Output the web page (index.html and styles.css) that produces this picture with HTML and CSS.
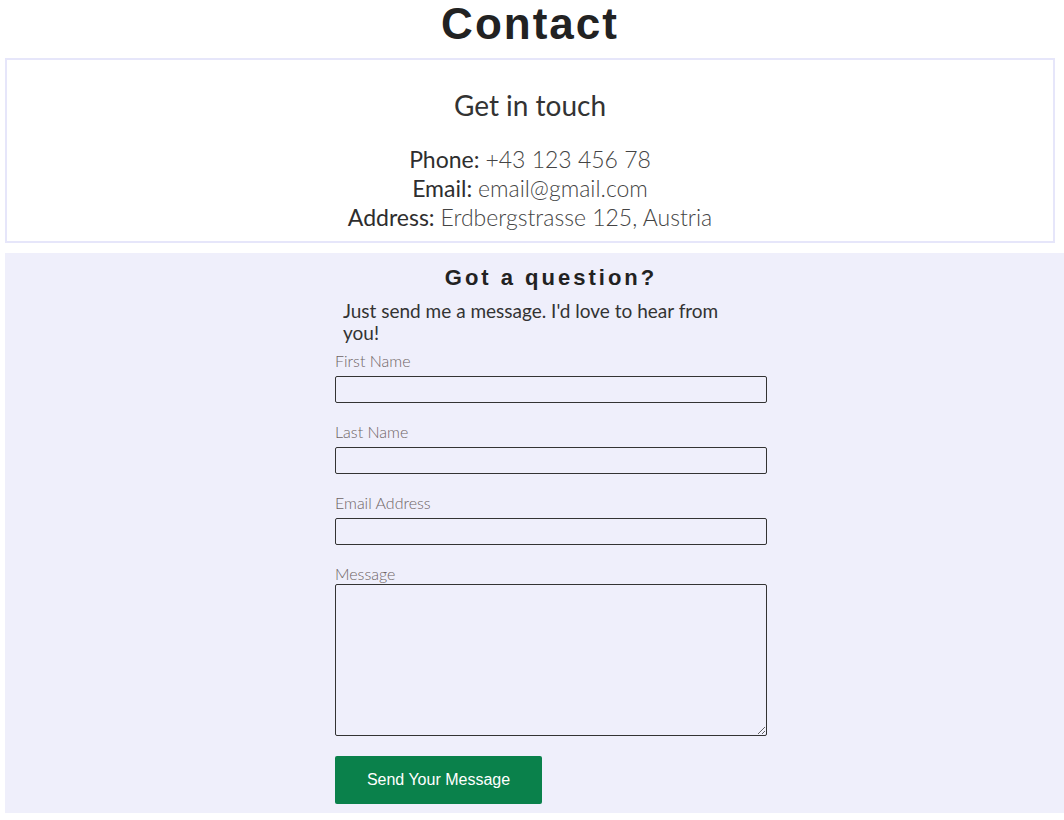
FILE: index.html
```html
<!DOCTYPE html>
<html lang="en">
<head>
<meta charset="utf-8">
<title>Contact</title>
<link rel="stylesheet" href="styles.css">
</head>
<body>
<main class="page">
  <h1 class="title">Contact</h1>
  <section class="info">
    <h2 class="info-heading">Get in touch</h2>
    <p class="info-lines">
      <span class="info-label">Phone:</span> <span class="info-value">+43 123 456 78</span><br>
      <span class="info-label">Email:</span> <span class="info-value">email@gmail.com</span><br>
      <span class="info-label">Address:</span> <span class="info-value">Erdbergstrasse 125, Austria</span>
    </p>
  </section>
  <section class="question">
    <form class="form">
      <h2 class="form-heading">Got a question?</h2>
      <p class="form-intro">Just send me a message. I'd love to hear from you!</p>
      <div class="field">
        <label class="field-label" for="fn">First Name</label>
        <input class="field-input" id="fn" type="text">
      </div>
      <div class="field">
        <label class="field-label" for="ln">Last Name</label>
        <input class="field-input" id="ln" type="text">
      </div>
      <div class="field">
        <label class="field-label" for="em">Email Address</label>
        <input class="field-input" id="em" type="email">
      </div>
      <div class="field field-message">
        <label class="field-label" for="msg">Message</label>
        <textarea class="field-area" id="msg"></textarea>
      </div>
      <button class="send" type="button">Send Your Message</button>
    </form>
  </section>
</main>
</body>
</html>
```
FILE: styles.css
```css
html {
  overflow-x: hidden;
}
body {
  margin: 0;
  background: #ffffff;
  color: #333333;
  font-family: "Lato", "Liberation Sans", sans-serif;
}
.page {
  padding: 0 0 0 5px;
}
.title {
  margin: 0 0 10px;
  width: 1050px;
  text-align: center;
  font-family: "Liberation Sans", Arial, sans-serif;
  font-weight: 700;
  font-size: 44px;
  line-height: 48px;
  letter-spacing: 2px;
  color: #222222;
}
.info {
  width: 1046px;
  height: 181px;
  border: 2px solid #e6e6fa;
  text-align: center;
}
.info-heading {
  margin: 25px 0 0;
  font-weight: 400;
  font-size: 28px;
  line-height: 40px;
  color: #333333;
}
.info-lines {
  margin: 20px 0 0;
  font-size: 23px;
  line-height: 29px;
}
.info-label {
  font-weight: 400;
  color: #2e2e2e;
}
.info-value {
  font-weight: 300;
  color: #444444;
}
.question {
  margin-top: 10px;
  width: 1092px;
  height: 560px;
  background: #efeffb;
  display: flex;
  justify-content: center;
}
.form {
  width: 432px;
  display: flex;
  flex-direction: column;
}
.form-heading {
  margin: 11px 0 0;
  text-align: center;
  font-family: "Liberation Sans", Arial, sans-serif;
  font-weight: 700;
  font-size: 22px;
  line-height: 28px;
  letter-spacing: 3px;
  color: #222222;
}
.form-intro {
  margin: 8px 0 0;
  padding: 0 8px;
  max-width: 400px;
  font-size: 19px;
  line-height: 22px;
  color: #333333;
}
.field {
  display: flex;
  flex-direction: column;
  margin-top: 7px;
}
.field + .field {
  margin-top: 19px;
}
.field-label {
  font-size: 16px;
  font-weight: 300;
  line-height: 20px;
  color: #6e6464;
  margin-bottom: 5px;
}
.field-input {
  box-sizing: border-box;
  height: 27px;
  margin: 0;
  border: 1px solid #333333;
  border-radius: 2px;
  background: transparent;
}
.field-message .field-label {
  margin-bottom: 0;
}
.field-area {
  box-sizing: border-box;
  height: 152px;
  margin: 0;
  border: 1px solid #333333;
  border-radius: 2px;
  background: transparent;
  resize: vertical;
}
.send {
  margin-top: 20px;
  align-self: flex-start;
  width: 207px;
  height: 48px;
  border: none;
  border-radius: 2px;
  background: #0a814b;
  color: #ffffff;
  font-family: "Liberation Sans", Arial, sans-serif;
  font-size: 16px;
}
```
